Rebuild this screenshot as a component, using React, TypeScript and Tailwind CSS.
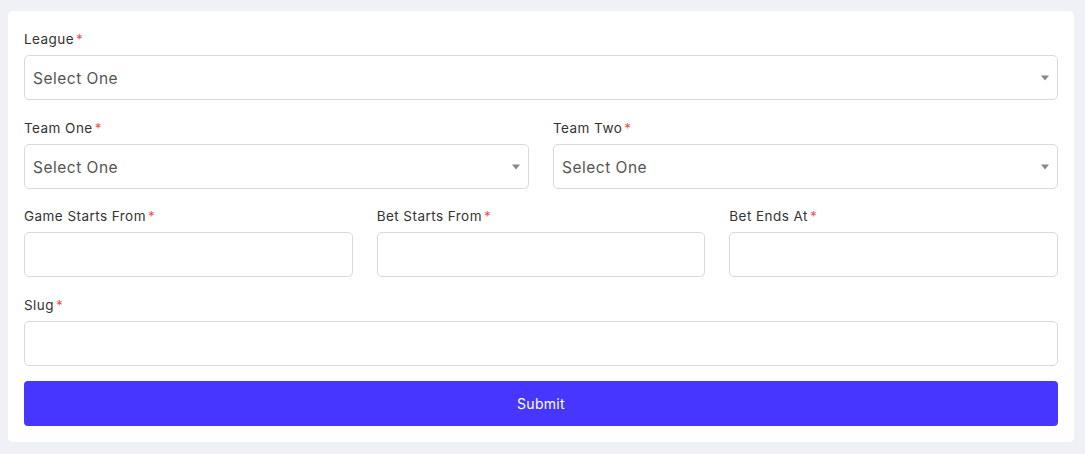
const Label = ({ text }: { text: string }) => (
  <label className="mb-1.5 block h-5 text-[13.5px] leading-5 tracking-[0.45px] text-[#333]">
    {text}
    <span className="ml-0.5 text-[#ea5455]">*</span>
  </label>
);

const Select = () => (
  <div className="relative flex h-[45px] items-center rounded-[5px] border border-[#d9d9de] bg-white px-2 pt-0.5">
    <span className="text-[15.5px] tracking-[0.5px] text-[#555]">Select One</span>
    <span className="absolute right-[8px] top-1/2 -translate-y-1/2 border-x-[4px] border-t-[5px] border-x-transparent border-t-[#888]" />
  </div>
);

const Input = () => (
  <div className="h-[45px] rounded-[5px] border border-[#d9d9de] bg-white" />
);

export default function App() {
  return (
    <div
      className="min-h-[454px] bg-[#f0f0f7] px-2 pt-[11px]"
      style={{ fontFamily: "Inter, 'Noto Sans', sans-serif" }}
    >
      <div className="w-[1066px] rounded-[5px] bg-white px-4 pb-4 pt-[18px]">
        <div className="mb-[18px]">
          <Label text="League" />
          <Select />
        </div>
        <div className="mb-[17px] grid grid-cols-2 gap-6">
          <div>
            <Label text="Team One" />
            <Select />
          </div>
          <div>
            <Label text="Team Two" />
            <Select />
          </div>
        </div>
        <div className="mb-[18px] grid grid-cols-3 gap-6">
          <div>
            <Label text="Game Starts From" />
            <Input />
          </div>
          <div>
            <Label text="Bet Starts From" />
            <Input />
          </div>
          <div>
            <Label text="Bet Ends At" />
            <Input />
          </div>
        </div>
        <div className="mb-[15px]">
          <Label text="Slug" />
          <Input />
        </div>
        <button className="h-[45px] w-full rounded-[4px] bg-[#4636ff] text-[14px] tracking-[0.3px] text-white">
          Submit
        </button>
      </div>
    </div>
  );
}
